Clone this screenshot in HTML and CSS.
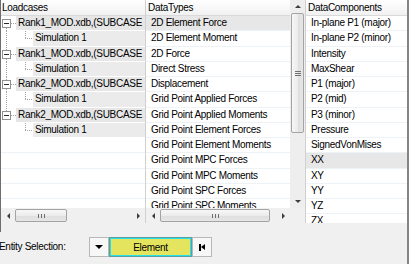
FILE: index.html
```html
<!DOCTYPE html>
<html lang="en">
<head>
    <meta charset="UTF-8">
    <meta name="viewport" content="width=device-width, initial-scale=1.0">
    <title>Results Browser</title>
    <link rel="stylesheet" href="styles.css">
</head>
<body>
    <div class="window">
        <div class="lists">
            <!-- Loadcases tree -->
            <div class="pane loadcases">
                <div class="view">
                    <div class="head">Loadcases</div>
                    <div class="node first"><span class="gut"><span class="exp"></span></span><span class="label">Rank1_MOD.xdb,(SUBCASE</span></div>
                    <div class="leaf pass"><span class="gut"></span><span class="label">Simulation 1</span></div>
                    <div class="node mid"><span class="gut"><span class="exp"></span></span><span class="label">Rank1_MOD.xdb,(SUBCASE</span></div>
                    <div class="leaf pass"><span class="gut"></span><span class="label">Simulation 1</span></div>
                    <div class="node mid"><span class="gut"><span class="exp"></span></span><span class="label">Rank2_MOD.xdb,(SUBCASE</span></div>
                    <div class="leaf pass"><span class="gut"></span><span class="label">Simulation 1</span></div>
                    <div class="node last"><span class="gut"><span class="exp"></span></span><span class="label">Rank2_MOD.xdb,(SUBCASE</span></div>
                    <div class="leaf"><span class="gut"></span><span class="label">Simulation 1</span></div>
                    <div class="row"></div>
                    <div class="row"></div>
                    <div class="row"></div>
                    <div class="row"></div>
                    <div class="row"></div>
                </div>
                <div class="hscroll">
                    <span class="arrow left"></span>
                    <span class="track"><span class="thumb"><i class="grip"></i></span></span>
                    <span class="arrow right"></span>
                </div>
            </div>

            <!-- DataTypes list -->
            <div class="pane datatypes">
                <div class="upper">
                    <div class="view">
                        <div class="head">DataTypes</div>
                        <div class="row sel">2D Element Force</div>
                        <div class="row">2D Element Moment</div>
                        <div class="row">2D Force</div>
                        <div class="row">Direct Stress</div>
                        <div class="row">Displacement</div>
                        <div class="row">Grid Point Applied Forces</div>
                        <div class="row">Grid Point Applied Moments</div>
                        <div class="row">Grid Point Element Forces</div>
                        <div class="row">Grid Point Element Moments</div>
                        <div class="row">Grid Point MPC Forces</div>
                        <div class="row">Grid Point MPC Moments</div>
                        <div class="row">Grid Point SPC Forces</div>
                        <div class="row">Grid Point SPC Moments</div>
                    </div>
                    <div class="vscroll">
                        <span class="arrow up"></span>
                        <span class="track"><span class="thumb"><i class="grip"></i></span></span>
                        <span class="arrow down"></span>
                    </div>
                </div>
                <div class="lower">
                    <div class="hscroll">
                        <span class="arrow left"></span>
                        <span class="track"><span class="thumb"><i class="grip"></i></span></span>
                        <span class="arrow right"></span>
                    </div>
                    <div class="corner"></div>
                </div>
            </div>

            <!-- DataComponents list -->
            <div class="pane components">
                <div class="view">
                    <div class="head">DataComponents</div>
                    <div class="row">In-plane P1 (major)</div>
                    <div class="row">In-plane P2 (minor)</div>
                    <div class="row">Intensity</div>
                    <div class="row">MaxShear</div>
                    <div class="row">P1 (major)</div>
                    <div class="row">P2 (mid)</div>
                    <div class="row">P3 (minor)</div>
                    <div class="row">Pressure</div>
                    <div class="row">SignedVonMises</div>
                    <div class="row sel">XX</div>
                    <div class="row">XY</div>
                    <div class="row">YY</div>
                    <div class="row">YZ</div>
                    <div class="row">ZX</div>
                </div>
            </div>
        </div>

        <div class="entity">
            <span class="caption">Entity Selection:</span>
            <span class="btn drop"></span>
            <span class="btn pick">Element</span>
            <span class="btn rewind"></span>
        </div>
    </div>
</body>
</html>
```

FILE: styles.css
```css
body {
    margin: 0;
    background: #f0f0f0;
    font-family: "Liberation Sans", Arial, sans-serif;
    font-size: 10px;
    letter-spacing: -0.3px;
    color: #000;
    --dv: repeating-linear-gradient(to bottom, #a3a3a3 0 1px, transparent 1px 2px);
    --dh: repeating-linear-gradient(to right, #a3a3a3 0 1px, transparent 1px 2px);
}
.window {
    width: 409px;
    height: 264px;
    box-sizing: border-box;
    border-right: 2px solid #848484;
    overflow: hidden;
}
.lists {
    display: flex;
    align-items: flex-start;
    height: 232px;
    box-sizing: border-box;
    border-left: 1px solid #6e6e6e;
}
.pane {
    flex: none;
    height: 223px;
    display: flex;
    flex-direction: column;
    background: #fff;
}
.loadcases { width: 144px; }
.datatypes { width: 159px; border-left: 1px solid #d0d0d0; }
.components { width: 101px; border-left: 1px solid #d0d0d0; }

.view {
    flex: 1;
    min-height: 0;
    overflow: hidden;
}
.head {
    height: 15px;
    line-height: 15px;
    padding-left: 2px;
    white-space: nowrap;
    background: linear-gradient(#ffffff, #f1f1f1);
    border-bottom: 1px solid #d9d9d9;
}
.loadcases .head { padding-left: 1px; }

/* rows are 15.25px: the source UI was scaled down a little */
.row {
    height: 15.25px;
    box-sizing: border-box;
    line-height: 14.25px;
    padding-left: 5px;
    white-space: nowrap;
    overflow: hidden;
    border-bottom: 1px solid #edf2f7;
}
.row.sel { background: #e7e7e7; }

/* tree rows */
.node, .leaf {
    display: flex;
    height: 15.25px;
}
.gut {
    flex: none;
    height: 100%;
}
.label {
    flex: 1;
    min-width: 0;
    height: 14.25px;
    line-height: 14.25px;
    padding-left: 2px;
    white-space: nowrap;
    overflow: hidden;
    background: #e6e6e6;
    border-bottom: 1px solid #fff;
}
.leaf .label { background: #ebebeb; }

.node .gut { width: 15px; }
.node.first .gut {
    background: var(--dh) 10px 7px / 5px 1px no-repeat, var(--dv) 5px 12px / 1px 4px no-repeat;
}
.node.mid .gut {
    background: var(--dh) 10px 7px / 5px 1px no-repeat, var(--dv) 5px 0 / 1px 100% no-repeat;
}
.node.last .gut {
    background: var(--dh) 10px 7px / 5px 1px no-repeat, var(--dv) 5px 0 / 1px 3px no-repeat;
}
.leaf .gut {
    width: 32px;
    background: var(--dv) 24px 0 / 1px 8px no-repeat, var(--dh) 24px 7px / 8px 1px no-repeat;
}
.leaf.pass .gut {
    background: var(--dv) 24px 0 / 1px 8px no-repeat, var(--dh) 24px 7px / 8px 1px no-repeat,
        var(--dv) 5px 0 / 1px 100% no-repeat;
}
.exp {
    width: 9px;
    height: 9px;
    margin: 3px 0 0 1px;
    box-sizing: border-box;
    border: 1px solid #919191;
    background: #fff;
    display: flex;
    align-items: center;
    justify-content: center;
}
.exp::before {
    content: "";
    width: 5px;
    height: 1px;
    background: #2a2a2a;
}

/* scrollbars */
.upper { display: flex; height: 208px; }
.upper .view { flex: none; width: 144px; }
.lower { display: flex; height: 15px; }
.lower .hscroll { width: 144px; }
.corner { flex: 1; background: #f0f0f0; }

.hscroll {
    flex: none;
    display: flex;
    height: 15px;
    background: #f0f0f0;
}
.arrow {
    flex: none;
    width: 14px;
    display: flex;
    align-items: center;
    justify-content: center;
}
.arrow::before {
    content: "";
    border-style: solid;
    border-color: transparent;
}
.arrow.left::before { border-width: 3px 3px 3px 0; border-right-color: #3c3c3c; }
.arrow.right::before { border-width: 3px 0 3px 3px; border-left-color: #3c3c3c; }
.arrow.up::before { border-width: 0 3px 3px; border-bottom-color: #3c3c3c; }
.arrow.down::before { border-width: 3px 3px 0; border-top-color: #3c3c3c; }

.track {
    flex: 1;
    display: flex;
    align-items: center;
}
.thumb {
    box-sizing: border-box;
    border: 1px solid #a3a3a3;
    border-radius: 2px;
    display: flex;
    align-items: center;
    justify-content: center;
}
.hscroll .thumb {
    height: 13px;
    background: linear-gradient(#f7f7f7, #ececec 50%, #dedede 51%, #e6e6e6);
}
.hscroll .grip {
    width: 7px;
    height: 4px;
    background: repeating-linear-gradient(to right, #6f6f6f 0 1px, transparent 1px 3px);
}
.loadcases .thumb { width: 52px; }
.lower .thumb { width: 110px; }

.vscroll {
    flex: none;
    width: 15px;
    display: flex;
    flex-direction: column;
    background: #eeeeee;
}
.vscroll .arrow { width: auto; }
.vscroll .arrow.up { height: 13px; }
.vscroll .arrow.down { height: 14px; }
.vscroll .track {
    flex-direction: column;
    align-items: center;
}
.vscroll .thumb {
    width: 13px;
    height: 120px;
    background: linear-gradient(to right, #f7f7f7, #ececec 50%, #dedede 51%, #e6e6e6);
}
.vscroll .grip {
    width: 6px;
    height: 5px;
    background: repeating-linear-gradient(to bottom, #6f6f6f 0 1px, transparent 1px 2px);
}

/* entity selection */
.entity {
    display: flex;
    align-items: flex-start;
    height: 32px;
    padding-top: 5px;
    box-sizing: border-box;
}
.caption {
    flex: none;
    width: 90px;
    margin-left: -1px;
    line-height: 20px;
}
.btn {
    flex: none;
    height: 20px;
    box-sizing: border-box;
    display: flex;
    align-items: center;
    justify-content: center;
    background: #f7f7f7;
    border: 1px solid #b8b8b8;
}
.drop { width: 20px; }
.drop::before {
    content: "";
    border-style: solid;
    border-width: 4px 4px 0;
    border-color: #000 transparent transparent;
}
.pick {
    width: 83px;
    background: #e4e45e;
    border-color: #5b9fa3;
    box-shadow: inset 0 0 0 1px #27dfe6;
}
.rewind { width: 20px; }
.rewind::before {
    content: "";
    width: 2px;
    height: 7px;
    background: #000;
}
.rewind::after {
    content: "";
    border-style: solid;
    border-width: 3.5px 4px 3.5px 0;
    border-color: transparent #000 transparent transparent;
}
```
